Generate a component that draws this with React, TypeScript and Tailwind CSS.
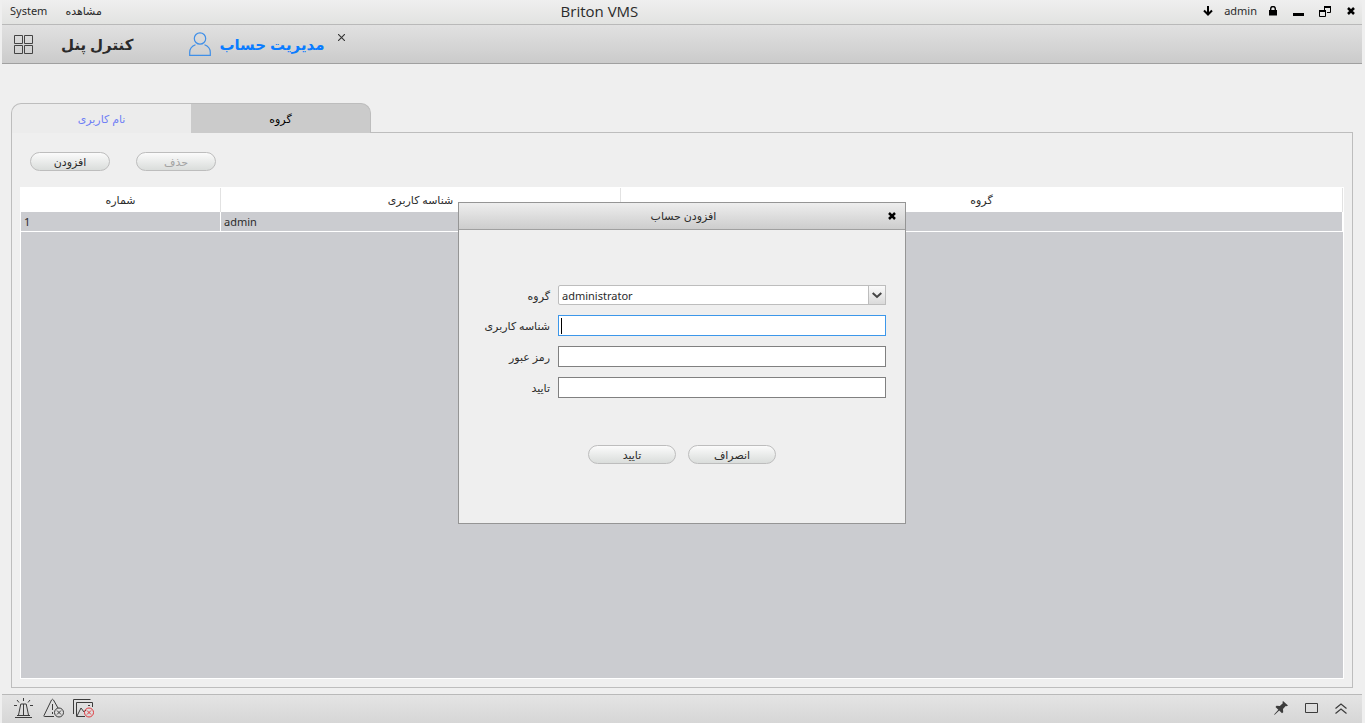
import { useState } from 'react';
import { clsx } from 'clsx';

const pillClass =
    'h-[19px] rounded-full border border-[#bdbdbd] bg-linear-to-b from-[#fbfbfb] to-[#dadddb] text-[11px] leading-[17px]';

const accounts = [{ id: 1, username: 'admin', group: '' }];

export default function App() {
    return (
        <div className="flex min-h-screen flex-col bg-[#efefef] font-['Noto_Sans','DejaVu_Sans',sans-serif] text-[11px] text-[#2b2b2b]">
            <div className="mr-[3px] ml-0.5">
                <TitleBar />
                <Toolbar />
            </div>
            <main className="flex flex-1 flex-col pt-[39px] pr-3 pb-1.5 pl-[11px]">
                <AccountTabs />
                <AccountPanel />
            </main>
            <StatusBar />
            <AddAccountDialog />
        </div>
    );
}

function TitleBar() {
    return (
        <header className="grid h-[25px] grid-cols-[41%_auto_1fr] items-center border-b border-[#b9b9b9] bg-linear-to-b from-[#efefef] to-[#e2e3e1] pb-0.5">
            <nav className="flex items-center gap-[18px] pl-2">
                <button className="leading-5">System</button>
                <button className="leading-5" lang="fa">مشاهده</button>
            </nav>
            <h1 className="pl-px font-['Open_Sans',sans-serif] text-[15px] leading-5">Briton VMS</h1>
            <div className="flex items-center justify-end pr-[7px] text-black">
                <button aria-label="Download">
                    <svg width="10" height="10" viewBox="0 0 10 10" fill="none" stroke="currentColor" strokeWidth="2">
                        <path d="M5 0v8M1 4.500l4 4 4-4" />
                    </svg>
                </button>
                <span className="ml-[11px] leading-5 text-[#2b2b2b]">admin</span>
                <button className="ml-3" aria-label="Lock">
                    <svg width="8" height="10" viewBox="0 0 8 10">
                        <path d="M0 4h8v5.500H0z" fill="currentColor" />
                        <path d="M1.700 4.500V2.800a2.300 2.300 0 0 1 4.600 0v1.700" fill="none" stroke="currentColor" strokeWidth="1.400" />
                    </svg>
                </button>
                <button className="ml-4" aria-label="Minimize">
                    <svg width="11" height="10" viewBox="0 0 11 10">
                        <path d="M0 7h11v3H0z" fill="currentColor" />
                    </svg>
                </button>
                <button className="ml-[15px]" aria-label="Restore">
                    <svg width="12" height="11" viewBox="0 0 12 11" fill="none" stroke="currentColor">
                        <path d="M5.500 4V.5h6v6H8" />
                        <path d="M5 1h7" strokeWidth="2" />
                        <path d="M.5 4.500h6v6h-6z" />
                        <path d="M0 5h7" strokeWidth="2" />
                    </svg>
                </button>
                <button className="ml-4" aria-label="Close">
                    <CloseIcon />
                </button>
            </div>
        </header>
    );
}

function Toolbar() {
    return (
        <div className="flex h-[39px] items-center border-b border-[#a0a0a0] bg-linear-to-b from-[#e1e1e1] to-[#cbcbcb] pl-3">
            <button aria-label="Home">
                <svg width="19" height="19" viewBox="0 0 19 19" fill="none" stroke="#444">
                    <path d="M.5.5h8v8h-8zM10.500.5h8v8h-8zM.5 10.500h8v8h-8zM10.500 10.500h8v8h-8z" />
                </svg>
            </button>
            <button className="ml-7 text-[15px] leading-6 font-bold" lang="fa">کنترل پنل</button>
            <button className="ml-14 flex items-center gap-2 text-[15px] leading-6 font-bold text-[#0a7cff]" lang="fa">
                <svg width="22" height="24" viewBox="0 0 22 24" fill="none" stroke="#3f8fe8" strokeWidth="1.200">
                    <circle cx="11" cy="6.500" r="5.700" />
                    <path d="M6.500 12.800C3 14 .7 16.500.7 20.500v2.800h20.600v-2.800c0-4-2.300-6.500-5.800-7.700" />
                </svg>
                مدیریت حساب
            </button>
            <button className="ml-3.5 self-start pt-[9px]" aria-label="Close tab">
                <svg width="7" height="7" viewBox="0 0 7 7" fill="none" stroke="#333" strokeWidth="1.100">
                    <path d="M0 0l7 7M7 0L0 7" />
                </svg>
            </button>
        </div>
    );
}

function AccountTabs() {
    const [active, setActive] = useState('users');
    const tabs = [
        { id: 'users', name: 'نام کاربری' },
        { id: 'groups', name: 'گروه' },
    ];

    return (
        <div className="flex h-[30px]" role="tablist">
            {tabs.map((tab) => (
                <button
                    key={tab.id}
                    role="tab"
                    lang="fa"
                    aria-selected={active === tab.id}
                    onClick={() => setActive(tab.id)}
                    className={clsx(
                        'w-[180px] border-t border-[#bdbdbd] pt-0.5',
                        tab.id === 'users' ? 'rounded-tl-[10px] border-l' : 'rounded-tr-[10px] border-r',
                        active === tab.id ? 'bg-[#ececec] text-[#6f7ff5]' : 'bg-[#cbcbcb] text-black'
                    )}
                >
                    {tab.name}
                </button>
            ))}
            <div className="flex-1 border-b border-[#bdbdbd]" />
        </div>
    );
}

function AccountPanel() {
    return (
        <section className="flex flex-1 flex-col border border-t-0 border-[#bdbdbd] px-2 pt-[19px] pb-2">
            <div className="flex gap-[26px] pl-2.5">
                <button className={clsx(pillClass, 'w-20')} lang="fa">افزودن</button>
                <button className={clsx(pillClass, 'w-20 text-[#a3a3a3]')} lang="fa" disabled>حذف</button>
            </div>
            <div className="mt-4 flex-1 border border-white bg-[#cbccd0]">
                <table className="w-full table-fixed border-separate border-spacing-0">
                    <colgroup>
                        <col className="w-[200px]" />
                        <col className="w-[400px]" />
                        <col />
                    </colgroup>
                    <thead className="bg-white">
                        <tr className="h-6" lang="fa">
                            <th className="border-r border-[#e2e2e2] p-0 font-normal">شماره</th>
                            <th className="border-r border-[#e2e2e2] p-0 font-normal">شناسه کاربری</th>
                            <th className="border-r border-[#e2e2e2] p-0 font-normal">گروه</th>
                        </tr>
                    </thead>
                    <tbody>
                        {accounts.map((account) => (
                            <tr key={account.id} className="h-5 leading-[18px]">
                                <td className="border-r border-b border-white p-0 pl-[3px]">{account.id}</td>
                                <td className="border-r border-b border-white p-0 pl-[3px]">{account.username}</td>
                                <td className="border-r border-b border-white p-0 pl-[3px]">{account.group}</td>
                            </tr>
                        ))}
                    </tbody>
                </table>
            </div>
        </section>
    );
}

function AddAccountDialog() {
    const [form, setForm] = useState({ username: '', password: '', confirm: '' });

    const fields = [
        { id: 'username', label: 'شناسه کاربری', type: 'text' },
        { id: 'password', label: 'رمز عبور', type: 'password' },
        { id: 'confirm', label: 'تایید', type: 'password' },
    ] as const;

    return (
        <div className="fixed inset-0 flex items-center justify-center pt-[3px] pr-px">
            <div role="dialog" aria-labelledby="dialog-title" className="flex h-[322px] w-[448px] flex-col border border-[#959595] bg-[#efefef]">
                <div className="flex h-[27px] items-center border-b border-[#a0a0a0] bg-linear-to-b from-[#eeeeee] to-[#cdcdcd] pr-[9px] pl-2">
                    <h2 id="dialog-title" className="flex-1 pl-3 text-center" lang="fa">افزودن حساب</h2>
                    <button className="text-black" aria-label="Close">
                        <CloseIcon />
                    </button>
                </div>
                <form className="flex flex-col pt-[55px]">
                    <div className="grid grid-cols-[91px_328px] items-center gap-x-2 gap-y-2.5">
                        <label htmlFor="group" className="pt-0.5 text-right" lang="fa">گروه</label>
                        <div className="relative h-5">
                            <select id="group" className="h-5 w-full appearance-none rounded-[2px] border border-[#bdbdbd] bg-white pt-px pl-[3px] text-[11px] leading-[17px] outline-none">
                                <option>administrator</option>
                            </select>
                            <span className="pointer-events-none absolute inset-y-0 right-0 flex w-[18px] items-center justify-center border border-[#bdbdbd] bg-linear-to-b from-[#fafafa] to-[#dadada]">
                                <svg width="10" height="7" viewBox="0 0 10 7" fill="none" stroke="#444" strokeWidth="2">
                                    <path d="M.7 1L5 5l4.300-4" />
                                </svg>
                            </span>
                        </div>
                        {fields.map((field) => (
                            <Field
                                key={field.id}
                                {...field}
                                focused={field.id === 'username'}
                                value={form[field.id]}
                                onChange={(value) => setForm({ ...form, [field.id]: value })}
                            />
                        ))}
                    </div>
                    <div className="mt-[47px] flex justify-center gap-3">
                        <button type="button" className={clsx(pillClass, 'w-[88px]')} lang="fa">تایید</button>
                        <button type="button" className={clsx(pillClass, 'w-[88px]')} lang="fa">انصراف</button>
                    </div>
                </form>
            </div>
        </div>
    );
}

type FieldProps = {
    id: string;
    label: string;
    type: string;
    focused: boolean;
    value: string;
    onChange: (value: string) => void;
};

function Field({ id, label, type, focused, value, onChange }: FieldProps) {
    return (
        <>
            <label htmlFor={id} className="pt-0.5 text-right" lang="fa">{label}</label>
            <div className="relative h-[21px]">
                <input
                    id={id}
                    type={type}
                    value={value}
                    onChange={(e) => onChange(e.target.value)}
                    className={clsx(
                        'block h-[21px] w-full border bg-white px-[3px] outline-none',
                        focused ? 'border-[#3c97ea]' : 'border-[#808080]'
                    )}
                />
                {/* Text cursor */}
                {focused && !value && <span className="pointer-events-none absolute top-[3px] left-[3px] h-4 w-px bg-black" />}
            </div>
        </>
    );
}

function StatusBar() {
    return (
        <footer className="mr-[3px] ml-0.5 flex h-[29px] items-center justify-between border-t border-[#b9b9b9] bg-linear-to-b from-[#e4e4e4] to-[#d6d6d6] pr-[15px] pb-0.5 pl-3 text-[#3c3c3c]">
            <div className="flex items-center gap-[9px]">
                <button aria-label="Alarm">
                    <svg width="20" height="20" viewBox="0 0 20 20" fill="none" stroke="currentColor">
                        <path d="M1 19.500h17M3 17.500h13M4.500 17l2.300-11h5.400l2.300 11M9.500 6v11M9.500 0v3M3 2l2 2.500M16 2l-2 2.500M0 7.500h3M16 7.500h3" />
                    </svg>
                </button>
                <button aria-label="Warnings">
                    <svg width="21" height="20" viewBox="0 0 21 20" fill="none" stroke="currentColor">
                        <path d="M11 18.500H1.500Q.5 18.500 1 17.500L8.500 2Q9.500.5 10.500 2l4.500 8M9.500 6v6M9.500 14v2" />
                        <circle cx="16" cy="14.500" r="4.500" />
                        <path d="M14 12.500l4 4M18 12.500l-4 4" />
                    </svg>
                </button>
                <button aria-label="Picture errors">
                    <svg width="21" height="20" viewBox="0 0 21 20" fill="none" stroke="currentColor">
                        <path d="M.5 16V1.500h17M12 18.500H3.500v-14h16V9M4 18l4-8 3 4 2-2M15 7.500h2" />
                        <g stroke="#e0383e">
                            <circle cx="16" cy="14.500" r="4.500" />
                            <path d="M14 12.500l4 4M18 12.500l-4 4" />
                        </g>
                    </svg>
                </button>
            </div>
            <div className="flex items-center gap-[17px]">
                <button aria-label="Pin">
                    <svg width="14" height="14" viewBox="0 0 14 14">
                        <path d="M9 0l5 4.500-1.500.8-.8-.3-2.700 3 .2 3.200-1.200 1L5.200 9.500 1 13.500 0 14l.5-1L4.300 8.700 1.500 6l1-1.200 3.300.2 3-2.700L8.500 1z" fill="currentColor" />
                    </svg>
                </button>
                <button aria-label="Window">
                    <svg width="13" height="10" viewBox="0 0 13 10" fill="none" stroke="currentColor">
                        <path d="M.5.5h12v9H.5z" />
                    </svg>
                </button>
                <button aria-label="Expand">
                    <svg width="12" height="11" viewBox="0 0 12 11" fill="none" stroke="currentColor" strokeWidth="1.200">
                        <path d="M.5 5.500L6 1l5.500 4.500M.5 10.500L6 6l5.500 4.500" />
                    </svg>
                </button>
            </div>
        </footer>
    );
}

function CloseIcon() {
    return (
        <svg width="8" height="8" viewBox="0 0 8 8" fill="none" stroke="currentColor" strokeWidth="2.500">
            <path d="M1 1l6 6M7 1L1 7" />
        </svg>
    );
}
